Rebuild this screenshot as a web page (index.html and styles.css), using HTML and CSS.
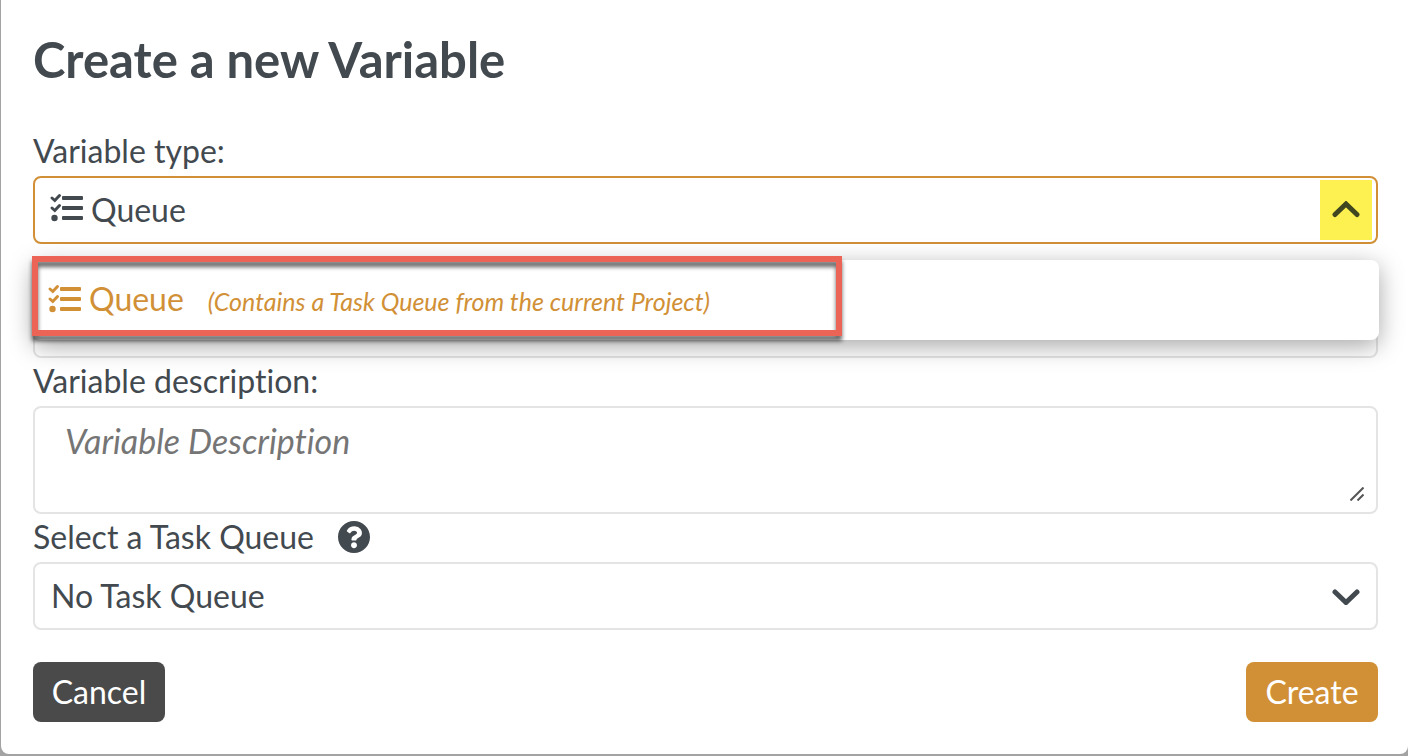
FILE: index.html
```html
<!DOCTYPE html>
<html lang="en">
<head>
<meta charset="utf-8">
<title>Create a new Variable</title>
<link rel="stylesheet" href="styles.css">
</head>
<body>

<form class="modal">
  <h1>Create a new Variable</h1>

  <label class="label" for="type">Variable type:</label>
  <div class="select-box open">
    <select id="type" class="field">
      <option>Queue</option>
    </select>
    <svg class="tasks-icon" viewBox="0 0 32 28">
      <path class="check" d="M1 4L3.800 6.500L8.500 1.500M1 14L3.800 16.500L8.500 11.500"/>
      <circle cx="3.5" cy="24" r="3.2"/>
      <rect x="11" y="2" width="21" height="4" rx="1"/>
      <rect x="11" y="12" width="21" height="4" rx="1"/>
      <rect x="11" y="22" width="21" height="4" rx="1"/>
    </svg>
    <span class="toggle">
      <svg class="chevron" viewBox="0 0 28 18"><path d="M3 13.500L14 3L25 13.500"/></svg>
    </span>
    <div class="menu">
      <button type="button" class="option">
        <svg class="tasks-icon" viewBox="0 0 32 28">
          <path class="check" d="M1 4L3.800 6.500L8.500 1.500M1 14L3.800 16.500L8.500 11.500"/>
          <circle cx="3.5" cy="24" r="3.2"/>
          <rect x="11" y="2" width="21" height="4" rx="1"/>
          <rect x="11" y="12" width="21" height="4" rx="1"/>
          <rect x="11" y="22" width="21" height="4" rx="1"/>
        </svg>
        <span>Queue</span>
        <em>(Contains a Task Queue from the current Project)</em>
      </button>
    </div>
    <div class="highlight"></div>
  </div>

  <input type="text" class="field name" aria-label="Name">

  <label class="label" for="description">Variable description:</label>
  <div class="area-box">
    <textarea id="description" class="field" placeholder="Variable Description"></textarea>
    <svg class="grip" viewBox="0 0 14 14"><path d="M0.500 13.500L13.500 0.500M7.500 13.500L13.500 7.500"/></svg>
  </div>

  <div class="label">
    <label for="queue">Select a Task Queue</label>
    <svg class="help" viewBox="8 8 496 496"><path d="M504 256c0 136.997-111.043 248-248 248S8 392.997 8 256C8 119.083 119.043 8 256 8s248 111.083 248 248zM262.655 90c-54.497 0-89.255 22.957-116.549 63.758-3.536 5.286-2.353 12.415 2.715 16.258l34.699 26.31c5.205 3.947 12.621 3.008 16.665-2.122 17.864-22.658 30.113-35.797 57.303-35.797 20.429 0 45.698 13.148 45.698 32.958 0 14.976-12.363 22.667-32.534 33.976C247.128 238.528 216 254.941 216 296v4c0 6.627 5.373 12 12 12h56c6.627 0 12-5.373 12-12v-1.333c0-28.462 83.186-29.647 83.186-106.667 0-58.002-60.165-102-116.531-102zM256 338c-25.365 0-46 20.635-46 46 0 25.364 20.635 46 46 46s46-20.636 46-46c0-25.365-20.635-46-46-46z"/></svg>
  </div>
  <div class="select-box">
    <select id="queue" class="field">
      <option>No Task Queue</option>
    </select>
    <span class="toggle">
      <svg class="chevron" viewBox="0 0 28 18"><path d="M3 5L14 15.500L25 5"/></svg>
    </span>
  </div>

  <div class="buttons">
    <button type="button" class="btn cancel">Cancel</button>
    <button type="submit" class="btn create">Create</button>
  </div>
</form>

</body>
</html>
```

FILE: styles.css
```css
* {
  box-sizing: border-box;
}

body {
  margin: 0;
  padding: 0 0 2px 1px;
  background-color: #a3a3a3;
  color: #42494f;
  font-family: Lato, sans-serif;
  font-size: 32px;
  font-variant-ligatures: none;
}

.modal {
  padding: 32px 30px 32px 32px;
  background-color: white;
  border-radius: 0 0 8px 8px;
}

h1 {
  margin: 0 0 40px;
  padding-bottom: 2px;
  font-size: 49px;
  line-height: 54px;
}

.label {
  display: flex;
  align-items: center;
  gap: 24px;
  height: 48px;
  padding-bottom: 3px;
}

.help {
  width: 32px;
  height: 32px;
  fill: #42494f;
}

.field {
  display: block;
  width: 100%;
  height: 68px;
  padding: 0 16px 2px;
  border: 2px solid #e4e4e4;
  border-radius: 8px;
  background-color: white;
  color: #42494f;
  font: inherit;
  outline: none;
}

select.field {
  appearance: none;
}

.select-box,
.area-box {
  position: relative;
}

.select-box.open .field {
  padding-left: 56px;
  border-color: #d19036;
}

.tasks-icon {
  width: 32px;
  height: 28px;
  overflow: visible;
  fill: currentColor;
}

.tasks-icon .check {
  fill: none;
  stroke: currentColor;
  stroke-width: 3;
  stroke-linecap: round;
}

.select-box > .tasks-icon {
  position: absolute;
  top: 18px;
  left: 18px;
}

.toggle {
  position: absolute;
  top: 4px;
  right: 6px;
  display: flex;
  align-items: center;
  justify-content: center;
  width: 52px;
  height: 60px;
  pointer-events: none;
}

.open .toggle {
  background-color: #fdf151;
  color: #40461f;
}

.chevron {
  width: 28px;
  height: 18px;
  fill: none;
  stroke: currentColor;
  stroke-width: 5;
  stroke-linecap: round;
}

.menu {
  position: absolute;
  top: 84px;
  left: 0;
  right: -1px;
  z-index: 1;
  background-color: white;
  border-radius: 8px;
  box-shadow: 0 6px 24px rgba(0, 0, 0, 0.35);
}

.option {
  display: flex;
  align-items: center;
  gap: 8px;
  width: 100%;
  height: 80px;
  padding: 0 16px 3px;
  border: none;
  background: none;
  color: #d19036;
  font: inherit;
}

.option em {
  margin-left: 16px;
  padding-top: 4px;
  font-size: 25px;
}

.highlight {
  position: absolute;
  top: 80px;
  left: -1px;
  z-index: 2;
  width: 810px;
  max-width: 100%;
  height: 80px;
  border: 6px solid #ec6456;
  filter: drop-shadow(0 5px 2px rgba(0, 0, 0, 0.6));
  pointer-events: none;
}

.name {
  height: 66px;
  margin-top: 48px;
}

textarea.field {
  height: 108px;
  padding: 12px 30px;
  resize: none;
}

textarea::placeholder {
  color: #757575;
  font-size: 34px;
  font-style: italic;
}

.grip {
  position: absolute;
  right: 14px;
  bottom: 13px;
  width: 14px;
  height: 14px;
  stroke: #555;
  stroke-width: 2;
}

.buttons {
  display: flex;
  justify-content: space-between;
  margin-top: 32px;
}

.btn {
  min-width: 132px;
  height: 60px;
  padding: 0 18px 2px;
  border: none;
  border-radius: 8px;
  color: white;
  font: inherit;
  cursor: pointer;
}

.cancel {
  background-color: #4a4a4a;
}

.create {
  background-color: #d19036;
}
```
